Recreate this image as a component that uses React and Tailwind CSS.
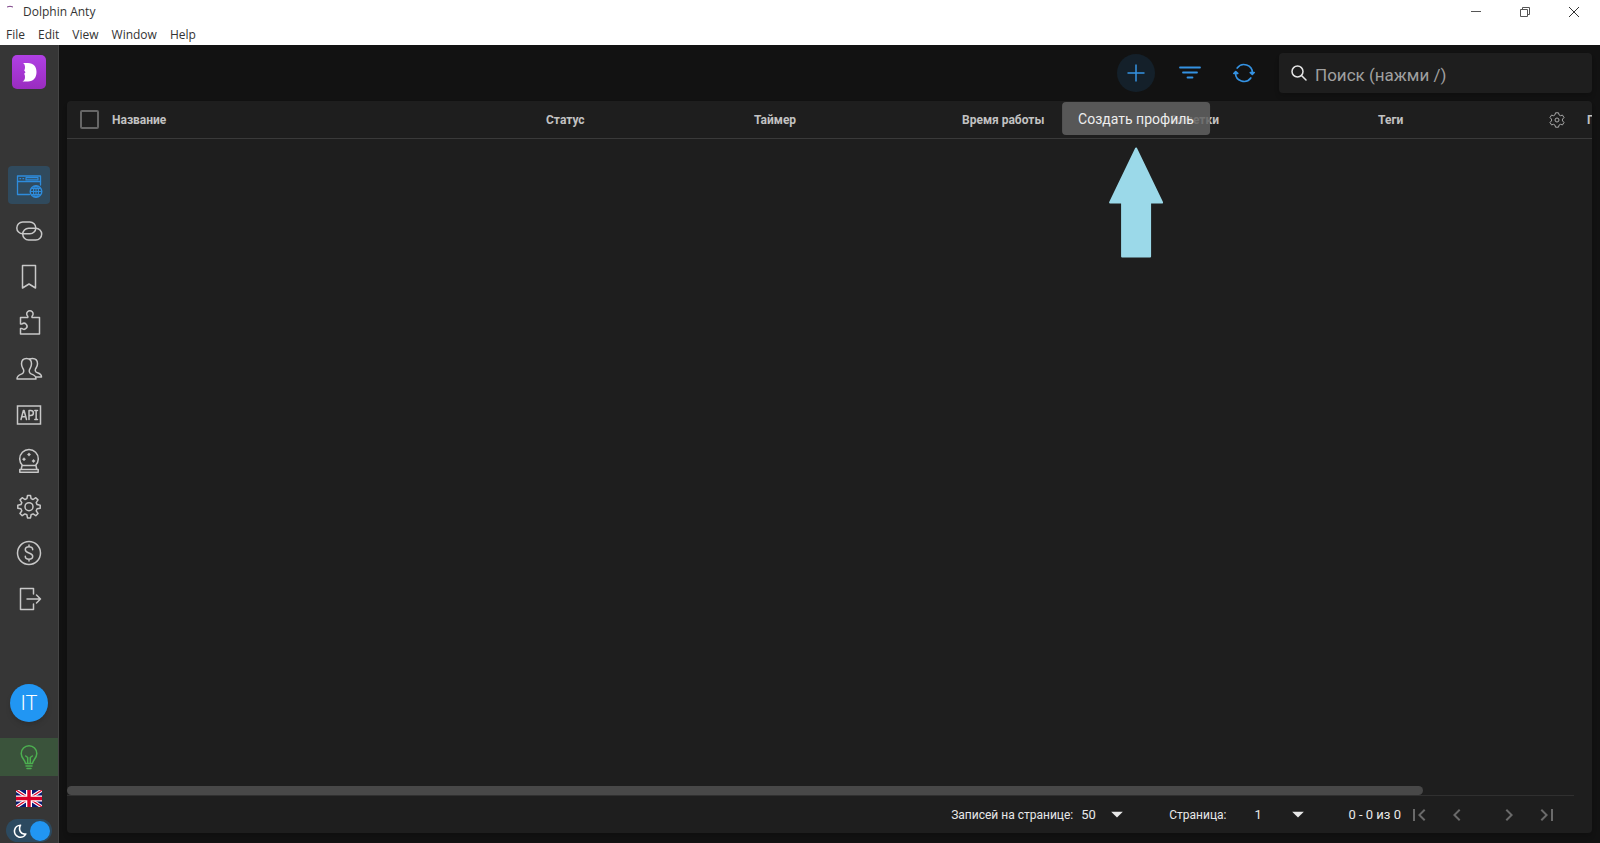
import React, { useState } from 'react';
import { MdArrowDropDown, MdChevronLeft, MdChevronRight, MdFirstPage, MdLastPage } from 'react-icons/md';

const Icon = ({ size = 28, width = 1.5, children }) => (
    <svg width={size} height={size} viewBox="0 0 28 28" fill="none" stroke="currentColor" strokeWidth={width} strokeLinecap="round" strokeLinejoin="round" aria-hidden="true">
        {children}
    </svg>
);

const GEAR = 'M12.5 2.5h3l.6 3.1 2 .9 2.7-1.8 2.2 2.2-1.8 2.7.9 2 3.1.6v3l-3.1.6-.9 2 1.8 2.7-2.2 2.2-2.7-1.8-2 .9-.6 3.1h-3l-.6-3.1-2-.9-2.7 1.8L5 20.500l1.800-2.700-.9-2-3.100-.6v-3l3.100-.6.9-2L5 6.900l2.200-2.200 2.700 1.800 2-.9z';

const navItems = [
    {
        label: 'Браузеры',
        icon: (
            <>
                <path d="M14.500 23.500H2.500V5h23v9" strokeWidth="1.300" />
                <path d="M2.500 10.500h23M5 7.700h.6M8 7.700h.6" strokeWidth="1.300" />
                <rect x="11" y="6.600" width="12" height="2.300" strokeWidth="1.200" />
                <circle cx="21" cy="20.500" r="5.800" strokeWidth="1.400" />
                <ellipse cx="21" cy="20.500" rx="2.500" ry="5.600" strokeWidth="1.200" />
                <path d="M21 15v11M15.500 20.500h11M16.500 17.500h9M16.500 23.500h9" strokeWidth="1.100" />
            </>
        ),
    },
    {
        label: 'Прокси',
        icon: (
            <>
                <rect x="1.800" y="5" width="19" height="11.800" rx="5.900" />
                <rect x="7.700" y="11.200" width="19" height="11.800" rx="5.900" />
            </>
        ),
    },
    { label: 'Закладки', icon: <path d="M7.500 2.500h13v22.500l-6.500-4-6.500 4z" /> },
    {
        label: 'Расширения',
        icon: <path d="M5.500 8.500h7.300V7.300A3.200 3.200 0 1 1 17 7.300v1.200h7.500V25h-19v-5.500h1.500a3 3 0 1 0 0-4.500H5.500z" />,
    },
    {
        label: 'Пользователи',
        icon: (
            <>
                <path d="M11.500 3.500c3.200 0 5 2.200 5 5.300 0 3-1.200 4-2 5.700-.7 1.800 0 4 2.200 4.600 2.300.7 4.300 2 4.300 4.900H2c0-3.100 2.200-4.200 4.300-4.900 2.200-.7 2.900-2.800 2.200-4.600-.8-1.700-2-2.700-2-5.700 0-3.100 1.800-5.300 5-5.300z" />
                <path d="M14.500 4c1-.3 2-.5 3-.5 3.200 0 5 2.200 5 5.300 0 2.700-1.200 3.700-2 5.200-.7 1.500 0 3.200 2 3.800 2.200.7 4 1.500 4 4.200h-5.800" />
            </>
        ),
    },
    {
        label: 'API',
        icon: (
            <>
                <rect x="2.500" y="5" width="23" height="18" strokeLinejoin="miter" />
                <path d="M6 18.500l2.400-9h.7l2.400 9M6.800 15.700h3.900M14 18.500v-9h1.700c3.600 0 3.600 5 0 5H14M19.800 9.500h2.700M19.800 18.500h2.700M21.150 9.500v9" />
            </>
        ),
    },
    {
        label: 'Сценарии',
        icon: (
            <>
                <path d="M7.500 18.500a9.300 9.300 0 1 1 13 0M7 18.500h14l.8 4H6.200zM4.800 22.500h18.400v2.700H4.800z" />
                <path d="M14 6.500v2M13 7.500h2M9 11.300v2M8 12.300h2M18.500 13v2M17.500 14h2" />
            </>
        ),
    },
    {
        label: 'Настройки',
        icon: (
            <>
                <path d={GEAR} />
                <circle cx="14" cy="13.700" r="4" />
            </>
        ),
    },
    {
        label: 'Оплата',
        icon: (
            <>
                <circle cx="14" cy="14" r="11.500" />
                <path d="M17.700 10.800c0-2-1.600-3-3.700-3s-3.700 1-3.700 3c0 4 7.400 2.300 7.400 6.400 0 2-1.600 3-3.700 3s-3.700-1-3.700-3M14 6v1.800M14 20.200V22" />
            </>
        ),
    },
    {
        label: 'Выход',
        icon: <path d="M18.500 9V3.500h-13v21h13V19M12 14h13.500M21.500 10l4 4-4 4" />,
    },
];

const columns = ['Статус', 'Таймер', 'Время работы', 'Заметки', 'Теги'];

const TitleBar = () => (
    <header className="bg-white text-[#333] text-xs font-['Open_Sans',sans-serif]">
        <div className="flex items-center justify-between h-6">
            <div className="flex items-center">
                <svg width="23" height="24" viewBox="0 0 23 24" fill="none" stroke="#7b3f86" aria-hidden="true">
                    <path d="M7 7q3-1.500 6 0" />
                </svg>
                <span>Dolphin Anty</span>
            </div>
            <div className="flex gap-[33px] pr-[18px]">
                <button aria-label="Свернуть">
                    <svg width="16" height="16" viewBox="0 0 16 16" fill="none" stroke="#555"><path d="M3 7.500h10" /></svg>
                </button>
                <button aria-label="Развернуть">
                    <svg width="16" height="16" viewBox="0 0 16 16" fill="none" stroke="#555"><path d="M3.500 5.500h7v7h-7zM5.500 5.500v-2h7v7h-2" /></svg>
                </button>
                <button aria-label="Закрыть">
                    <svg width="16" height="16" viewBox="0 0 16 16" fill="none" stroke="#333"><path d="M3 3l10 10M13 3L3 13" /></svg>
                </button>
            </div>
        </div>
        <nav className="flex items-center gap-[13px] h-[21px] px-1.5">
            {['File', 'Edit', 'View', 'Window', 'Help'].map((item) => (
                <button key={item}>{item}</button>
            ))}
        </nav>
    </header>
);

const Sidebar = () => {
    const [dark, setDark] = useState(true);

    return (
        <aside className="w-[59px] shrink-0 bg-[#363636] border-r border-[#454545] flex flex-col items-center pt-[10px] pb-px">
            <a href="#" aria-label="Dolphin" className="mb-[77px]">
                <svg width="34" height="34" viewBox="0 0 34 34" className="block">
                    <defs>
                        <linearGradient id="logo" x1="0" y1="0" x2="0" y2="1">
                            <stop offset="0" stopColor="#b040e4" />
                            <stop offset="1" stopColor="#9a2cc0" />
                        </linearGradient>
                    </defs>
                    <rect width="34" height="34" rx="5" fill="url(#logo)" />
                    <path d="M11 8h5c5.500 0 8.500 3.600 8.500 9s-3 9.500-8.500 9.500h-5.500c1.800-1 2.500-2.500 2.500-4.500 0-1.200-.2-2.200-.8-3.200l1.300-1.600-1.300-1.700c.6-1 .8-2 .8-3.200 0-1.900-.5-3.300-2-4.300z" fill="#fff" />
                </svg>
            </a>

            <nav className="flex flex-col gap-2">
                {navItems.map((item, index) => (
                    <a
                        key={item.label}
                        href="#"
                        aria-label={item.label}
                        className={index === 0
                            ? 'w-[42px] h-[38px] flex items-center justify-center rounded bg-[#304a5d] text-[#2e8cdc]'
                            : 'w-[42px] h-[38px] flex items-center justify-center rounded text-[#c8c8c8]'}
                    >
                        <Icon>{item.icon}</Icon>
                    </a>
                ))}
            </nav>

            <div className="mt-auto w-full flex flex-col items-center">
                <button className="size-[38px] rounded-full bg-[#2196f3] text-white text-xl font-['Roboto',sans-serif] font-light shadow-md">IT</button>
                <button aria-label="Подсказки" className="mt-4 w-full h-[38px] flex items-center justify-center bg-[#3a533b] text-[#4caf50]">
                    <Icon>
                        <path d="M10.500 20.500c0-3.500-4.300-5-4.300-10a7.800 7.800 0 0 1 15.600 0c0 5-4.300 6.500-4.300 10zM11 23h6M12 25.500h4M12.700 20.500v-6l-2-1.500M15.300 20.500v-6l2-1.500" />
                    </Icon>
                </button>
                <button aria-label="English" className="mt-[14px]">
                    <svg width="26" height="17" viewBox="0 0 26 17" className="block">
                        <path fill="#0a1a72" d="M0 0h26v17H0z" />
                        <path stroke="#fff" strokeWidth="3.400" d="M0 0l26 17M26 0L0 17" />
                        <path stroke="#d80027" strokeWidth="1.200" d="M0 0l26 17M26 0L0 17" />
                        <path stroke="#fff" strokeWidth="6" d="M13 0v17M0 8.500h26" />
                        <path stroke="#d80027" strokeWidth="3.400" d="M13 0v17M0 8.500h26" />
                    </svg>
                </button>
                <button
                    role="switch"
                    aria-checked={dark}
                    aria-label="Тёмная тема"
                    onClick={() => setDark(!dark)}
                    className="mt-3 w-[46px] h-[23px] rounded-full bg-[#2c4a60] flex items-center justify-between pl-[7px] pr-0.5"
                >
                    <svg width="14" height="14" viewBox="0 0 14 14" fill="none" stroke="#fff" strokeWidth="1.600" strokeLinejoin="round">
                        <path d="M7.500 1.200A6 6 0 1 0 12.800 10C8 11 5 6 7.500 1.200z" />
                    </svg>
                    <span className="size-5 rounded-full bg-[#2196f3]" />
                </button>
            </div>
        </aside>
    );
};

const Toolbar = () => (
    <div className="flex items-center justify-end gap-4 h-14 text-[#3492e2]">
        <div className="relative z-10">
            <button aria-label="Создать профиль" className="size-[38px] rounded-full bg-[#14202a] flex items-center justify-center">
                <svg width="18" height="18" viewBox="0 0 18 18" stroke="currentColor" strokeWidth="1.500"><path d="M9 .5v17M.5 9h17" /></svg>
            </button>
            <div className="absolute top-full left-1/2 -translate-x-1/2 pt-[10px] flex flex-col items-center gap-3">
                <div role="tooltip" className="px-4 h-[33px] flex items-center rounded bg-[#616161]/85 text-[#eee] text-sm whitespace-nowrap">
                    Создать профиль
                </div>
                <svg width="54" height="111" viewBox="0 0 54 111" fill="#9bd9e9" stroke="#9bd9e9" strokeWidth="2" strokeLinejoin="round">
                    <path d="M27 1.500L53 55.500H41v54H13v-54H1z" />
                </svg>
            </div>
        </div>
        <button aria-label="Фильтр" className="size-[38px] flex items-center justify-center">
            <svg width="22" height="14" viewBox="0 0 22 14" stroke="currentColor" strokeWidth="1.800" strokeLinecap="round"><path d="M1 1.500h20M4 6.500h14M8.500 11.500h5" /></svg>
        </button>
        <button aria-label="Обновить" className="size-[38px] flex items-center justify-center">
            <svg width="22" height="22" viewBox="0 0 22 22" fill="none" stroke="currentColor" strokeWidth="1.700" strokeLinecap="round" strokeLinejoin="round">
                <path d="M4.200 6A8.500 8.500 0 0 1 19.500 11M17.800 16A8.500 8.500 0 0 1 2.500 11" />
                <path d="M.8 11.500l1.900-1.800 2 1.800zM17.300 10.500l2 1.800 1.900-1.800z" fill="currentColor" />
            </svg>
        </button>
        <label className="w-[313px] h-10 flex items-center gap-2 px-3 rounded bg-[#1e1e1e] shadow-md text-[#e6e6e6]">
            <svg width="16" height="16" viewBox="0 0 16 16" fill="none" stroke="currentColor" strokeWidth="1.500" strokeLinecap="round" className="shrink-0">
                <circle cx="6.500" cy="6.500" r="5.500" />
                <path d="M10.500 10.500l4.500 4.500" />
            </svg>
            <input type="text" aria-label="Поиск" placeholder="Поиск (нажми /)" className="w-full min-w-0 pt-1.5 bg-transparent outline-none text-[17px] placeholder:text-[#a0a0a0]" />
        </label>
    </div>
);

const ProfilesTable = () => (
    <div className="flex-1 overflow-hidden">
        <table className="table-fixed w-[1713px] text-left text-xs font-bold text-[#c2c2c2]">
            <thead>
                <tr className="h-[37px] border-b border-[#3a3a3a]">
                    <th className="w-[45px] pl-[13px]">
                        <input type="checkbox" aria-label="Выбрать все" className="block appearance-none size-[19px] rounded-xs border-2 border-[#666]" />
                    </th>
                    <th className="w-[434px] pt-0.5">Название</th>
                    {columns.map((column) => (
                        <th key={column} className="w-[208px] pt-0.5">
                            {column === 'Теги' ? (
                                <div className="flex items-center justify-between pr-[21px]">
                                    {column}
                                    <button aria-label="Настроить столбцы" className="text-[#aaa]">
                                        <svg width="16" height="16" viewBox="0 0 16 16" fill="none" stroke="currentColor" strokeLinejoin="round" className="block">
                                            <path d="M6.500.8h3l.5 2 1.500.9 2-.6 1.500 2.500-1.500 1.500v1.800l1.500 1.500-1.500 2.500-2-.6-1.500.9-.5 2h-3l-.5-2-1.500-.9-2 .6L1 10.400l1.500-1.500V7.100L1 5.600l1.500-2.500 2 .6L6 2.800z" />
                                            <circle cx="8" cy="8" r="2" />
                                        </svg>
                                    </button>
                                </div>
                            ) : column}
                        </th>
                    ))}
                    <th className="pt-0.5 pl-px">Прокси</th>
                </tr>
            </thead>
            <tbody />
        </table>
    </div>
);

const Pagination = () => (
    <footer className="flex items-center justify-end h-[37px] pr-[33px] text-xs text-[#e8e8e8]">
        <label htmlFor="rows">Записей на странице:</label>
        <div className="relative ml-2 mr-11 text-[13px]">
            <select id="rows" className="appearance-none w-11 bg-transparent outline-none">
                <option>50</option>
            </select>
            <MdArrowDropDown size={28} className="absolute -right-1.5 top-1/2 -translate-y-1/2 pointer-events-none" />
        </div>
        <label htmlFor="page">Страница:</label>
        <div className="relative ml-7 mr-[42px] text-[13px]">
            <select id="page" className="appearance-none w-13 bg-transparent outline-none">
                <option>1</option>
            </select>
            <MdArrowDropDown size={28} className="absolute -right-1.5 top-1/2 -translate-y-1/2 pointer-events-none" />
        </div>
        <span className="mr-1.5 text-[13px]">0 - 0 из 0</span>
        <div className="flex text-[#6a6a6a]">
            <button aria-label="Первая страница" disabled><MdFirstPage size={24} /></button>
            <button aria-label="Предыдущая страница" disabled className="ml-[14px]"><MdChevronLeft size={24} /></button>
            <button aria-label="Следующая страница" disabled className="ml-7"><MdChevronRight size={24} /></button>
            <button aria-label="Последняя страница" disabled className="ml-[14px]"><MdLastPage size={24} /></button>
        </div>
    </footer>
);

const App = () => (
    <div className="h-screen flex flex-col overflow-hidden bg-[#121212] font-['Roboto',sans-serif]">
        <TitleBar />
        <div className="flex-1 min-h-0 flex">
            <Sidebar />
            <main className="flex-1 min-w-0 flex flex-col px-2 pb-[10px]">
                <Toolbar />
                <section className="flex-1 min-h-0 flex flex-col rounded bg-[#1e1e1e] shadow-md overflow-hidden">
                    <ProfilesTable />
                    <div className="mr-[18px] border-b border-[#303030]">
                        <div className="w-[90%] h-[9px] rounded-full bg-[#484848]" />
                    </div>
                    <Pagination />
                </section>
            </main>
        </div>
    </div>
);

export default App;
